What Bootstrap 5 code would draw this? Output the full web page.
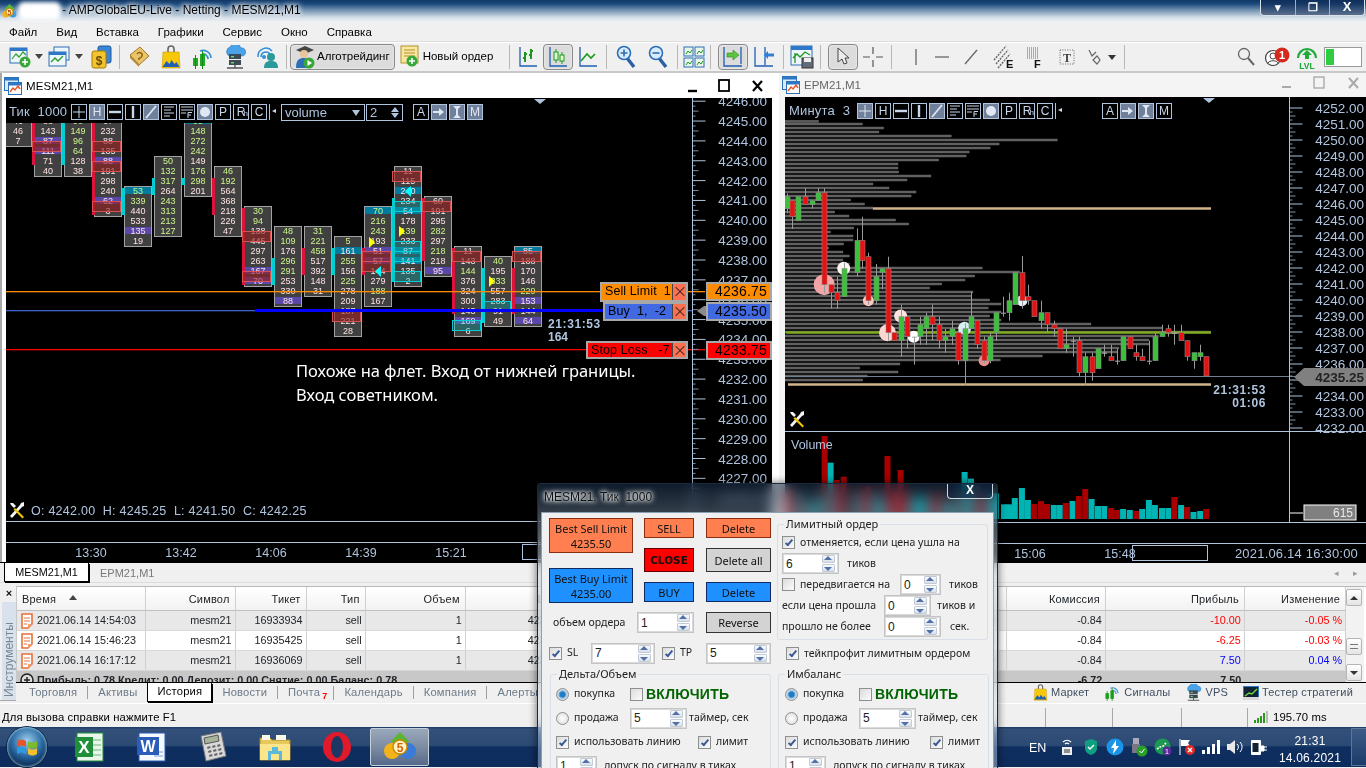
<!DOCTYPE html>
<html lang="ru">
<head>
<meta charset="UTF-8">
<title>AMPGlobalEU-Live - Netting - MESM21,M1</title>
<link href="https://cdn.jsdelivr.net/npm/bootstrap@5.3.3/dist/css/bootstrap.min.css" rel="stylesheet">
<style>
html,body{width:1366px;height:768px;overflow:hidden;margin:0}
body{background:#f0f0f0;font-family:"Liberation Sans",Arial,sans-serif;font-size:12px;color:#000;position:relative}
.app{width:1366px;height:768px}
/* title bar */
.ttl{height:22px;background:linear-gradient(180deg,#0f3766 0,#1d4a7c 18%,#6f90b0 45%,#d5dfe8 80%,#eef2f5 100%);position:relative;flex:none}
.ttl-app{width:18px;height:22px;padding:2px 0 0 2px}
.ttl-blur{width:43px;height:18px;background:#fff;border-radius:6px;filter:blur(2px);margin-top:2px}
.ttl-txt{font-size:12px;line-height:20px;text-shadow:0 0 6px #fff,0 0 6px #fff,0 0 4px #fff;white-space:nowrap;padding-left:1px}
.wbtns{position:absolute;right:1px;top:0;width:105px;height:16px;border:1px solid #d8e0ea;border-top:0;border-radius:0 0 4px 4px;background:rgba(16,40,80,.55);color:#fff;font-weight:700}
.wbtns span{flex:1;text-align:center;line-height:14px;border-right:1px solid #9fb0c4;font-size:11px}
.wbtns span:last-child{border:0;font-size:13px}
/* menu + toolbar */
.mnu{height:20px;flex:none;padding:0 0 0 9px;gap:19px;font-size:11.5px;line-height:18px;border-bottom:1px solid #dcdcdc}
.tbr{height:31px;flex:none;border-bottom:2px solid #c8c8c8;border-top:1px solid #fff;padding-left:8px}
.tc{display:flex;align-items:center;justify-content:center;height:26px;flex:none}
.w20{width:20px}.w26{width:26px}.w30{width:30px}.w32{width:32px}.w38{width:38px}.w40{width:40px}
.tsep{width:1px;height:24px;background:#b8b8b8;margin:0 3px;flex:none}
.tact{border:1px solid #8a8a8a;border-radius:4px;background:#dcdcdc;box-shadow:inset 0 0 2px #fff}
.tlbl{font-size:11.5px;white-space:nowrap;padding-left:2px}
/* mdi */
.mdi{height:490px;flex:none;border-bottom:1px solid #000}
.wl{width:779px;background:#fff;border-left:2px solid #a8a8a8;flex:none}
.wr{width:587px;background:#f4f4f4;flex:none}
.wtl{height:25px;font-size:11.5px;line-height:22px;padding-left:2px;letter-spacing:.1px}
.wtr{height:24px;font-size:11.5px;line-height:20px;padding-left:3px;color:#666}
.chart{background:#000;position:relative;overflow:hidden;flex:1}
.chl{margin:0 7px 0 4px}
.chr{margin-left:6px}
.chart>svg{position:absolute;left:0;top:0;display:block}
.cbar{position:relative;height:16px;margin-top:6px;color:#b0c4de;font-size:13px;z-index:2;align-items:center}
.cbl{padding-left:3px}
.cbl2{padding-left:4px}
.tn{width:62px;padding-left:0;white-space:pre;letter-spacing:.2px}
.tn2{width:68px;white-space:pre;letter-spacing:.2px}
.cb{width:16px;height:16px;border:1px solid #b0c4de;margin-right:2px;text-align:center;line-height:14px;font-size:12px;flex:none;position:relative;color:#c8d6e8;overflow:hidden}
.cb svg{display:block;width:14px;height:14px}
.cb em{font-style:normal;font-size:8px;position:absolute;right:0;bottom:-2px}
.cb.onb{background:#70809a;color:#dfe7f2}
.cnb{width:9px;border:0;border-left:1px solid #b0c4de;font-size:8px}
.cmb{width:84px;height:17px;border:1px solid #b0c4de;margin:0 1px 0 1px;padding-left:3px;line-height:15px;font-size:13px;position:relative}
.cmb::after{content:"";position:absolute;right:4px;top:5px;border:4px solid transparent;border-top:6px solid #b0c4de;border-bottom:0}
.csp{width:37px;height:17px;border:1px solid #b0c4de;padding-left:3px;line-height:15px;position:relative;margin-right:10px}
.csp::before{content:"";position:absolute;right:3px;top:2px;border:4px solid transparent;border-bottom:5px solid #b0c4de;border-top:0}
.csp::after{content:"";position:absolute;right:3px;bottom:2px;border:4px solid transparent;border-top:5px solid #b0c4de;border-bottom:0}
.gapr{margin-left:36px}
.ord{position:absolute;display:flex;border:2px solid #a8a8a8;font-size:12.5px;line-height:15px;color:#000;z-index:2;white-space:pre}
.ord b{font-weight:400;flex:1;padding-left:3px;letter-spacing:.1px}
.ord i{width:14px;border-left:1px solid #444;background:#ff7050;font-style:normal;position:relative}
.ord i::before,.ord i::after{content:"";position:absolute;left:1px;top:7px;width:12px;height:1px;background:#222;transform:rotate(45deg)}
.ord i::after{transform:rotate(-45deg)}
.prc{position:absolute;width:66px;height:19px;border:2px solid #a8a8a8;text-align:right;font-size:14px;line-height:15px;padding-right:3px;z-index:2;letter-spacing:.2px}
.o1{left:594px;top:184px;width:88px;height:20px}
.o2{left:597px;top:204px;width:85px;height:19px}
.o3{left:580px;top:243px;width:102px;height:18px}
.p1{left:700px;top:184px;background:#ff8c00}
.p2{left:700px;top:204px;background:#4169e1}
.p3{left:700px;top:243px;background:#f00}
.bgo{background:#ff8c00}.bgb{background:#4169e1}.bgr{background:#f00}
.note{position:absolute;left:290px;top:261px;width:390px;color:#fff;font-family:"Noto Sans",sans-serif;font-size:16.5px;line-height:24px;z-index:2}
/* mdi tabs */
.mtabs{height:20px;flex:none;align-items:flex-end;position:relative;border-bottom:1px solid #ddd}
.mtab{width:85px;height:19px;margin-left:4px;background:#fff;border:1px solid #000;border-top:0;text-align:center;line-height:18px;font-size:10.8px;box-shadow:1px 1px 0 #000}
.mtab2{margin-left:11px;color:#777;line-height:18px;font-size:11px}
.marr{margin-left:auto;padding-right:8px;color:#999;font-size:9px;gap:14px;line-height:18px}
/* toolbox */
.tbx{height:118px;flex:none;padding:3px 0 0 0;position:relative;border-bottom:1px solid #aaa;margin-bottom:2px}
.tside{width:14px;margin-left:2px;flex:none;background:#d9e2ec;color:#7c8794;position:relative}
.tclose{height:16px;background:#f0f0f0;text-align:center;font-weight:700;font-size:11px;line-height:14px;color:#111}
.tvert{writing-mode:vertical-rl;transform:rotate(180deg);font-size:12px;line-height:14px;height:97px;text-align:left;padding-top:2px}
.tmain{flex:1;min-width:0;position:relative}
.twrap{height:96px;overflow:hidden;border-top:1px solid #b8b8b8;border-left:1px solid #c8c8c8;background:#fff;position:relative}
.tbl{table-layout:fixed;width:1329px;margin:0;border-collapse:collapse;font-size:10.8px}
.tbl th,.tbl td{padding:0 3px 0 0;height:20px;line-height:18px;border-right:1px solid #d0d0d0;border-bottom:1px solid #d8d8d8;text-align:right;font-weight:400;white-space:nowrap;overflow:hidden;background:transparent;color:inherit}
.tbl th{height:23px;background:linear-gradient(#fff,#f2f2f2);padding:0 5px 2px 0;border-bottom:1px solid #c0c0c0;letter-spacing:.2px;font-size:11px}
.tbl tr.zeb td{background:#e8e8e8}
.tbl tr.sum td{background:#c8c8c8;font-weight:700;border:0}
.tbl .tl{text-align:left;padding-left:5px;position:relative}
.tbl td.tl{padding-left:20px}
.tbl td svg{position:absolute;left:3px;top:2px}
.sa{position:absolute;left:52px;top:8px;border:4px solid transparent;border-bottom:5px solid #444;border-top:0}
.neg{color:#f00!important}.pos{color:#00f!important}
.vsb{position:absolute;right:2px;top:0;width:18px;height:96px;background:#f2f2f2;z-index:1}
.vb{position:absolute;left:0;width:16px;height:17px;background:linear-gradient(#fff,#e4e4e4);border:1px solid #b4b4b4;border-radius:2px;text-align:center}
.vb1{top:2px}.vb2{top:51px;color:#777}.vb3{top:77px}
.vb1::after{content:"";position:absolute;left:3px;top:6px;border:4px solid transparent;border-bottom:4px solid #333;border-top:0}
.vb3::after{content:"";position:absolute;left:3px;top:6px;border:4px solid transparent;border-top:4px solid #333;border-bottom:0}
.vb2::after{content:"";position:absolute;left:3px;top:5px;width:8px;height:5px;border-top:1px solid #777;border-bottom:1px solid #777}
.ttabs{height:20px;border-top:1px solid #000;font-size:11.2px;color:#6c7a88;align-items:center;letter-spacing:.2px;position:relative;background:#f0f0f0;padding-left:3px}
.ttb{padding:0 10px;border-right:1px solid #a0a0a0;line-height:13px;white-space:nowrap}
.ttb.noln{border:0}
.ttb.pcht{padding-right:6px}
.ttb.act{background:#fff;color:#000;border:1px solid #000;border-top:0;height:19px;line-height:17px;margin:0;width:65px;padding:0;text-align:center;box-shadow:1px 1px 0 #000;align-self:flex-start}
.mail{color:#f00;font-size:9px;font-weight:700;position:relative;top:3px;padding-left:2px}
.ttr{margin-left:auto;padding-right:13px;gap:15px;color:#404f60;align-items:center;font-size:11px}
.ttr span{display:flex;align-items:center;gap:3px;white-space:nowrap}
/* status + taskbar */
.stb{height:24px;flex:none;align-items:center;font-size:11.3px;padding:3px 0 0 2px;letter-spacing:.12px;border-top:1px solid #fff}
.stb-c{border-left:1px solid #a8a8a8;height:19px;flex:none}
.s1{margin-left:auto;width:67px}.s2{width:69px}.s3{width:66px}
.s4{width:119px;display:flex;align-items:center;padding-left:6px;gap:5px}
.tkb{height:40px;flex:none;background:linear-gradient(180deg,#1d3a63 0,#33507a 6%,#2b4a74 46%,#0f2f60 50%,#0d2c5c 100%);color:#fff;align-items:center;position:relative}
.orb{width:40px;height:40px;border-radius:50%;margin-left:7px;flex:none;display:flex;align-items:center;justify-content:center;background:radial-gradient(circle at 50% 35%,#9fd0ee,#2c6ca4 45%,#0a2c58 75%);box-shadow:0 0 0 1px #0a2548,inset 0 0 3px #dff}
.tk{width:62px;height:38px;flex:none;display:flex;align-items:center;justify-content:center}
.tk1{margin-left:11px}
.tkact{background:linear-gradient(180deg,#9aa8ba,#7c8ca2 50%,#55698a);border:1px solid #c5cfdb;border-radius:2px;width:59px;margin-left:2px}
.tray{margin-left:auto;align-items:center;height:40px}
.try{width:24px;text-align:center;display:flex;justify-content:center;flex:none}
.lng{width:26px;font-size:12.5px;padding-top:2px;flex:none}
.clk{width:76px;font-size:12px;line-height:17px;text-align:center;letter-spacing:.2px;flex:none;margin:0 3px 0 1px;padding-top:6px}
.dsk{width:15px;height:38px;border:1px solid #5d7698;border-right:0;background:linear-gradient(#3e5c86,#1a3a69);flex:none}
/* order panel */
.dlg{position:absolute;left:537px;top:483px;width:461px;height:285px;z-index:5;overflow:hidden;border:1px solid #1b2a3f;border-bottom:0;background:linear-gradient(180deg,rgba(30,55,85,.5) 0,rgba(185,203,218,.5) 22%,rgba(205,220,232,.4) 100%);backdrop-filter:blur(7px) saturate(1.3);border-radius:4px 4px 0 0;box-shadow:0 0 8px rgba(0,0,0,.6)}
.dttl{height:28px;padding:6px 0 0 6px;font-size:12px;line-height:15px;text-shadow:0 0 6px #fff,0 0 5px #f0f4f8,0 0 3px #f0f4f8;color:#111;position:relative;white-space:pre}
.dcls{position:absolute;right:4px;top:0;width:46px;height:15px;border:1px solid #d0d8e2;border-top:0;border-radius:0 0 4px 4px;background:rgba(10,30,60,.5);color:#fff;text-align:center;font-weight:700;font-size:12px;line-height:13px;text-shadow:none}
.dbody{margin:0 3px;height:260px;background:#f0f0f0;padding:5px 0 0 7px;font-size:10.5px;font-family:"Noto Sans","Liberation Sans",sans-serif;color:#222;border:1px solid #8ca0b4;border-bottom:0}
.dcols{gap:6px}
.dleft{width:222px;flex:none}
.dright{width:211px;flex:none}
.dbtn{display:block;border-radius:0;padding:0;border:1px solid #444;font-size:11px;line-height:15px;color:#111;text-align:center;width:100%;--bs-btn-hover-color:#111}
.dbtn,.dbtn:hover{color:#111}
.cw1{width:84px;flex:none}.cw2{width:50px;flex:none;margin-left:11px}.cw3{width:65px;flex:none;margin-left:12px}
.h35{height:35px}.h20{height:20px}.h24{height:24px}.h21{height:21px}
.vg15{gap:15px}.vg10{gap:10px}
.org,.org:hover{background:#ff7f50;border-color:#8a2e10}
.blu,.blu:hover{background:#1e90ff;border-color:#102a60}
.red,.red:hover{background:#f00;border-color:#600;font-weight:700;font-family:"DejaVu Sans",sans-serif;font-size:10.5px}
.lgr,.lgr:hover{background:#d3d3d3;border-color:#333}
.rw{display:flex;align-items:center;white-space:nowrap}
.rv{margin-top:9px;height:21px}
.rs{margin-top:10px;height:20px}
.spn{display:inline-flex;align-items:center;height:21px;border:1px solid #c4c4c4;outline:1px solid #dadada;outline-offset:-2px;background:#fff;padding-left:3px;font-size:12px;position:relative;flex:none;font-family:"Liberation Sans",sans-serif}
.spn::before,.spn::after{content:"";position:absolute;right:3px;width:13px;height:8px;background:linear-gradient(#fafbfd,#d8dfe8);border:1px solid #c2cbd6;border-radius:1px}
.spn::before{top:1px}.spn::after{bottom:1px}
.spn u{position:absolute;right:6px;z-index:1;border:4px solid transparent;text-decoration:none}
.spn u:first-of-type{top:2px;border-bottom:4px solid #5070a8;border-top:0}
.spn u:last-of-type{bottom:2px;border-top:4px solid #5070a8;border-bottom:0}
.s41{width:41px}.s47{width:47px}.s57{width:57px}.s64{width:64px}.s65{width:65px}
.chk{width:13px;height:13px;border:1px solid #8e8f8f;background:linear-gradient(135deg,#dcdcdc,#fbfbfb);display:inline-block;flex:none;position:relative;margin-right:5px}
.chk.on::after{content:"";position:absolute;left:4px;top:1px;width:4px;height:8px;border:solid #3a5a98;border-width:0 2px 2px 0;transform:rotate(40deg)}
.rdo{width:13px;height:13px;border-radius:50%;border:1px solid #8e8f8f;background:radial-gradient(circle,#fff,#d8d8d8);flex:none;display:inline-block;margin-right:5px}
.rdo.on{background:radial-gradient(circle,#1c7cc8 0,#1c7cc8 30%,#bcd2e4 55%,#eee 100%)}
.gbx{border:1px solid #d8dfe6;border-radius:3px;position:relative}
.gt{position:absolute;top:-8px;left:6px;background:#f0f0f0;padding:0 2px;font-size:11px;line-height:14px}
.gl{padding:7px 4px 0 4px;height:116px;margin-top:6px}
.gl .rw{height:21px}
.tkp{height:27px;padding-left:9px;margin-top:0}
.dbot{gap:7px;margin-top:7px;padding-left:1px}
.gb{width:221px;height:110px;padding:7px 0 0 5px}
.gb2{width:211px;padding-left:6px}
.gb .rw{height:24px}
.vk{color:#006400;font-weight:700;font-size:14px;font-family:"Liberation Sans",sans-serif;letter-spacing:.25px;margin-left:-2px}
.lbsl{width:24px;flex:none}.lbtp{margin-left:7px}
.lb100{width:100px;flex:none}.lb102{width:102px;flex:none}
.m2{margin-left:2px}.m8{margin-left:8px}.m6{margin-left:6px}.m9{margin-left:9px}
.wl1{width:56px;flex:none}
.lb1{width:124px;flex:none}.lb2{width:127px;flex:none}
.dp{margin-left:7px}
</style>
</head>
<body>
<svg width="0" height="0" class="position-absolute">
<defs>
<symbol id="i-bag" viewBox="0 0 20 24"><path d="M7 7V4a3 3 0 0 1 6 0v3" fill="none" stroke="#666" stroke-width="1.6"/><path d="M2 7h16l1 16H1z" fill="#f7c80a" stroke="#c89a00" stroke-width=".6"/><path d="M1.500 22l4-6 3 3 2-4 3 4 2-2 3 5z" fill="#1f5fb4"/></symbol>
<symbol id="i-sig" viewBox="0 0 24 24"><path d="M9 6a8 8 0 0 1 11 7M11 9a5 5 0 0 1 6 5" fill="none" stroke="#2f8fd8" stroke-width="1.600"/><rect x="2" y="13" width="5" height="8" fill="#22aa22"/><rect x="9" y="9" width="5" height="12" fill="#22aa22"/><path d="M4.500 10v14M11.500 6v18" stroke="#118811"/></symbol>
<symbol id="i-vps" viewBox="0 0 24 24"><path d="M6 11a5 5 0 0 1 1-9 6 6 0 0 1 11 1 4 4 0 0 1 1 8z" fill="#4aa3e8" stroke="#1f6fb8" stroke-width=".6"/><rect x="6" y="9" width="12" height="5" fill="#3c4a54"/><rect x="6" y="15" width="12" height="5" fill="#3c4a54"/><rect x="8" y="11" width="3" height="1.400" fill="#6fdc6f"/><rect x="8" y="17" width="3" height="1.400" fill="#6fdc6f"/><path d="M12 20v3M4 23h16" stroke="#555" stroke-width="1.400"/></symbol>
<symbol id="i-win" viewBox="0 0 18 18"><rect x=".5" y=".5" width="14" height="13" fill="#dbeaf8" stroke="#2d6fb4"/><rect x=".5" y=".5" width="14" height="3" fill="#2d78c8"/><rect x="4.500" y="5.500" width="13" height="12" fill="#fff" stroke="#2d6fb4"/><rect x="4.500" y="5.500" width="13" height="3" fill="#2d78c8"/><path d="M6 15l3-4 2 2 3-4 2 3" fill="none" stroke="#e8552a" stroke-width="1.400"/></symbol>
<symbol id="i-doc" viewBox="0 0 14 16"><path d="M2 1h10v10l-4 4H2z" fill="#fff" stroke="#e8703a" stroke-width="1.600"/><path d="M4 5h6M4 8h6M4 11h3" stroke="#e8703a"/><path d="M8 15v-4h4z" fill="#f6a070"/></symbol>
<symbol id="i-tool" viewBox="0 0 18 18"><path d="M16 1l-3 1-1 2-10 11 2 2 10-11 2-1z" fill="#f4f4f4"/><path d="M2 2l3 0 3 3-2 2-3-3z" fill="#f4f4f4"/><path d="M7 7l9 9-1.500 1.500-9-9z" fill="#f0c400"/></symbol>
<symbol id="c-pl" viewBox="0 0 14 14"><path d="M7 1v12M1 7h12" stroke="currentColor" fill="none"/></symbol>
<symbol id="c-hl" viewBox="0 0 14 14"><path d="M1 7h12" stroke="currentColor" stroke-width="2.400"/></symbol>
<symbol id="c-vl" viewBox="0 0 14 14"><path d="M7 1v12" stroke="currentColor" stroke-width="2.400"/></symbol>
<symbol id="c-dg" viewBox="0 0 14 14"><path d="M2 13L12 1" stroke="currentColor" stroke-width="1.800"/></symbol>
<symbol id="c-ls" viewBox="0 0 14 14"><path d="M2 2h10M2 5h7M2 8h10M2 11h6" stroke="currentColor"/></symbol>
<symbol id="c-lf" viewBox="0 0 14 14"><path d="M1 2h12M1 5h12M1 8h5" stroke="currentColor"/><path d="M8 13V7.500h4M8 10h3" stroke="currentColor" fill="none"/></symbol>
<symbol id="c-dt" viewBox="0 0 14 14"><circle cx="7" cy="7" r="5" fill="currentColor"/></symbol>
<symbol id="c-ar" viewBox="0 0 14 14"><path d="M1 6h6V3l5 4-5 4V8H1z" fill="currentColor"/></symbol>
<symbol id="c-ib" viewBox="0 0 14 14"><path d="M3 1h8l-3 3v6l3 3H3l3-3V4z" fill="currentColor"/></symbol>
</defs>
</svg>
<div class="app d-flex flex-column">
  <div class="ttl d-flex">
    <div class="ttl-app"><svg width="15" height="17" viewBox="0 0 15 17"><circle cx="4" cy="11" r="3.500" fill="#f2b21a"/><circle cx="11" cy="11" r="3.500" fill="#3a9ad9"/><path d="M7.500 1l5 5-5 4-5-4z" fill="#5cb531"/><circle cx="7.500" cy="9" r="3.600" fill="#fff3c4" stroke="#c98a00"/><text x="7.500" y="11.500" font-size="7" font-weight="700" text-anchor="middle" fill="#c24e00">5</text></svg></div>
    <div class="ttl-blur"></div>
    <div class="ttl-txt">- AMPGlobalEU-Live - Netting - MESM21,M1</div>
    <div class="wbtns d-flex"><span>▾</span><span>❐</span><span>X</span></div>
  </div>
  <div class="mnu d-flex align-items-center">
    <span>Файл</span><span>Вид</span><span>Вставка</span><span>Графики</span><span>Сервис</span><span>Окно</span><span>Справка</span>
  </div>
  <div class="tbr d-flex align-items-center">
    <div class="tc w38"><svg width="36" height="22" viewBox="0 0 36 22"><rect x="1" y="2" width="17" height="15" fill="#eef5fb" stroke="#2d6fb4"/><rect x="1" y="2" width="17" height="3" fill="#2d78c8"/><path d="M3 13l4-5 3 3 4-5 3 3" fill="none" stroke="#2aa02a" stroke-width="1.200"/><circle cx="16" cy="16" r="5.500" fill="#38a838"/><path d="M13 16h6M16 13v6" stroke="#fff" stroke-width="1.600"/><path d="M26 8h8l-4 5z" fill="#444"/></svg></div>
    <div class="tc w40"><svg width="36" height="22" viewBox="0 0 36 22"><rect x="6" y="1" width="15" height="13" fill="#eef5fb" stroke="#2d6fb4"/><rect x="1" y="6" width="17" height="14" fill="#eef5fb" stroke="#2d6fb4"/><rect x="1" y="6" width="17" height="3" fill="#2d78c8"/><path d="M3 16l4-4 3 3 5-5" fill="none" stroke="#2aa02a" stroke-width="1.400"/><path d="M27 8h8l-4 5z" fill="#444"/></svg></div>
    <div class="tc w30"><svg width="22" height="24" viewBox="0 0 22 24"><rect x="8" y="1" width="13" height="17" rx="2" fill="#3a84d4" stroke="#1d5aa0"/><rect x="2" y="6" width="14" height="17" rx="2" fill="#f4c430" stroke="#a67c00"/><text x="9" y="20" font-size="12" font-weight="700" text-anchor="middle" fill="#6a4b00">$</text></svg></div>
    <div class="tsep"></div>
    <div class="tc w32"><svg width="22" height="22" viewBox="0 0 22 22"><path d="M2 9l10-8 9 9-10 9z" fill="#e8c46a" stroke="#a5792a"/><path d="M2 9l9 9v3L2 12z" fill="#b58a3a"/><path d="M9 8c2-3 6-1 5 2s-4 1-3 4" fill="none" stroke="#9a6a10" stroke-width="1.600"/></svg></div>
    <div class="tc w32"><svg width="20" height="24"><use href="#i-bag"/></svg></div>
    <div class="tc w32"><svg width="24" height="24"><use href="#i-sig"/></svg></div>
    <div class="tc w32"><svg width="24" height="24"><use href="#i-vps"/></svg></div>
    <div class="tc w32"><svg width="24" height="24" viewBox="0 0 24 24"><path d="M3 12a8 8 0 0 1 14-6M6 12a5 5 0 0 1 9-3" fill="none" stroke="#2f8fd8" stroke-width="1.500"/><circle cx="9" cy="12" r="2" fill="#2f8fd8"/><circle cx="16" cy="12" r="4" fill="#2a9a9a"/><path d="M9 23c0-6 3-7 7-7s7 1 7 7z" fill="#2a9a9a"/></svg></div>
    <div class="tsep"></div>
    <div class="tc tact px-1"><svg width="20" height="24" viewBox="0 0 20 24"><path d="M1 5l9-4 9 4-9 4z" fill="#444"/><circle cx="9" cy="9" r="4" fill="#e8c49a"/><path d="M1 23c0-8 3-10 8-10s7 3 7 10z" fill="#2d6fb4"/><circle cx="14" cy="18" r="5.500" fill="#38a838"/><path d="M12.500 15v6l4.500-3z" fill="#fff"/></svg><span class="tlbl">Алготрейдинг</span></div>
    <div class="tc ms-1"><svg width="22" height="24" viewBox="0 0 22 24"><rect x="2" y="1" width="17" height="17" fill="#f8e7a0" stroke="#b4922a"/><path d="M5 5h11M5 8h11M5 11h11" stroke="#b4922a"/><circle cx="13" cy="16" r="5.500" fill="#38a838"/><path d="M10 16h6M13 13v6" stroke="#fff" stroke-width="1.600"/></svg><span class="tlbl">Новый ордер</span></div>
    <div class="tsep ms-3"></div>
    <div class="tc w30"><svg width="20" height="22" viewBox="0 0 20 22"><path d="M2 1v19h17" fill="none" stroke="#1f5fb4" stroke-width="1.300"/><path d="M7 6v10M5 12h2M7 8h2M13 3v10M11 9h2M13 5h2" stroke="#1a9a1a" stroke-width="2"/></svg></div>
    <div class="tc w30 tact"><svg width="20" height="22" viewBox="0 0 20 22"><path d="M2 1v19h17" fill="none" stroke="#1f5fb4" stroke-width="1.300"/><path d="M8 3v14M14 6v12" stroke="#1a9a1a"/><rect x="6" y="6" width="4" height="8" fill="#dfffd0" stroke="#1a9a1a"/><rect x="12" y="9" width="4" height="6" fill="#dfffd0" stroke="#1a9a1a"/></svg></div>
    <div class="tc w30"><svg width="20" height="22" viewBox="0 0 20 22"><path d="M2 1v19h17" fill="none" stroke="#1f5fb4" stroke-width="1.300"/><path d="M3 15l6-7 4 4 4-4" fill="none" stroke="#1a9a1a" stroke-width="1.600"/></svg></div>
    <div class="tsep"></div>
    <div class="tc w32"><svg width="20" height="24" viewBox="0 0 20 24"><path d="M11 13l7 9" stroke="#2d5fa8" stroke-width="3.400"/><circle cx="8" cy="8" r="6.500" fill="#d8ecfb" stroke="#2d6fb4" stroke-width="1.600"/><path d="M4.500 8h7M8 4.500v7" stroke="#2d6fb4" stroke-width="1.600"/></svg></div>
    <div class="tc w32"><svg width="20" height="24" viewBox="0 0 20 24"><path d="M11 13l7 9" stroke="#2d5fa8" stroke-width="3.400"/><circle cx="8" cy="8" r="6.500" fill="#d8ecfb" stroke="#2d6fb4" stroke-width="1.600"/><path d="M4.500 8h7" stroke="#2d6fb4" stroke-width="1.600"/></svg></div>
    <div class="tsep"></div>
    <div class="tc w26"><svg width="22" height="22" viewBox="0 0 22 22"><g fill="#e8f4ea" stroke="#2d6fb4"><rect x="1" y="1" width="9" height="9"/><rect x="12" y="1" width="9" height="9"/><rect x="1" y="12" width="9" height="9"/><rect x="12" y="12" width="9" height="9"/></g><path d="M3 8l2-3 2 2 2-3M14 8l2-3 2 2 2-3M3 19l2-3 2 2 2-3M14 19l2-3 2 2 2-3" fill="none" stroke="#1a9a1a"/></svg></div>
    <div class="tsep"></div>
    <div class="tc w30 tact ms-1"><svg width="22" height="22" viewBox="0 0 22 22"><path d="M2 1v19h18M19 1v17" fill="none" stroke="#1f5fb4" stroke-width="1.300"/><path d="M5 7h6V4l6 5-6 5v-3H5z" fill="#5cc43c" stroke="#2a8a1a" stroke-width=".6"/></svg></div>
    <div class="tc w32"><svg width="22" height="22" viewBox="0 0 22 22"><path d="M2 1v19h18M12 1v18" fill="none" stroke="#1f5fb4" stroke-width="1.300"/><path d="M21 7.500h-6V5l-4 4 4 4v-2.500h6z" fill="#2f7fd8"/></svg></div>
    <div class="tsep"></div>
    <div class="tc w30"><svg width="24" height="24" viewBox="0 0 24 24"><rect x="1" y="1" width="21" height="19" fill="#eef5fb" stroke="#2d6fb4"/><rect x="1" y="1" width="21" height="4" fill="#2d78c8"/><path d="M5 18V8M3 13l4-4 3 3 5-5 5 3" fill="none" stroke="#1a9a1a" stroke-width="1.300"/><rect x="12" y="13" width="11" height="10" fill="#606c78" stroke="#333"/><rect x="14" y="13" width="7" height="4" fill="#eee"/></svg></div>
    <div class="tsep"></div>
    <div class="tc w30 tact ms-1"><svg width="14" height="20" viewBox="0 0 14 20"><path d="M2 1v14l4-3 2 5 3-1-2-5h4z" fill="#eee" stroke="#444"/></svg></div>
    <div class="tc w30"><svg width="22" height="22" viewBox="0 0 22 22"><path d="M11 1v7M11 14v7M1 11h7M14 11h7" stroke="#555" stroke-width="1.200"/></svg></div>
    <div class="tsep"></div>
    <div class="tc w26 ms-2"><svg width="6" height="18"><path d="M3 1v16" stroke="#666" stroke-width="1.300"/></svg></div>
    <div class="tc w26"><svg width="16" height="6"><path d="M1 3h14" stroke="#666" stroke-width="1.300"/></svg></div>
    <div class="tc w32"><svg width="14" height="16"><path d="M1 15L13 1" stroke="#666" stroke-width="1.300"/></svg></div>
    <div class="tc w32"><svg width="22" height="24" viewBox="0 0 22 24"><path d="M2 15l12-14M4 19L16 5M6 23L18 9" stroke="#666" stroke-dasharray="2 1" stroke-width="1.400"/><text x="14" y="23" font-size="11" font-weight="700" fill="#111">E</text></svg></div>
    <div class="tc w32"><svg width="20" height="24" viewBox="0 0 20 24"><path d="M2 3h12M2 5h12M2 7h12M2 9h12M2 11h12M2 13h12" stroke="#666" stroke-dasharray="1 1"/><text x="9" y="23" font-size="11" font-weight="700" fill="#111">F</text></svg></div>
    <div class="tc w32"><svg width="18" height="20" viewBox="0 0 18 20"><rect x="2" y="3" width="14" height="14" fill="none" stroke="#666" stroke-dasharray="1 1.400"/><text x="9" y="15" font-size="12" font-weight="700" text-anchor="middle" font-family="Liberation Serif" fill="#444">T</text></svg></div>
    <div class="tc w38"><svg width="32" height="20" viewBox="0 0 32 20"><path d="M3 3l3 6 4-4M7 13l4-4 3 4-3 4z" fill="none" stroke="#666" stroke-width="1.200"/><path d="M22 8h8l-4 5z" fill="#333"/></svg></div>
    <div class="tsep"></div>
    <div class="ms-auto d-flex align-items-center">
      <div class="tc w32"><svg width="18" height="20" viewBox="0 0 18 20"><circle cx="7" cy="7" r="5.500" fill="none" stroke="#666" stroke-width="1.300"/><path d="M11 11l6 7" stroke="#666" stroke-width="2"/></svg></div>
      <div class="tc w32"><svg width="28" height="24" viewBox="0 0 28 24"><circle cx="9" cy="13" r="7.500" fill="#fff" stroke="#444" stroke-width="1.200"/><circle cx="9" cy="11" r="3" fill="none" stroke="#444"/><path d="M4 18c1-3 9-3 10 0" fill="none" stroke="#444"/><circle cx="18" cy="10" r="7.500" fill="#d42a1e"/><text x="18" y="14" font-size="11" font-weight="700" fill="#fff" text-anchor="middle">1</text></svg></div>
      <div class="tc w26"><svg width="24" height="26" viewBox="0 0 24 26"><path d="M3 14a9 9 0 0 1 18 0" fill="none" stroke="#1faa3a" stroke-width="2.200"/><path d="M12 6l5 5h-3v4h-4v-4H7z" fill="#1faa3a"/><text x="12" y="25" font-size="8.500" font-weight="700" text-anchor="middle" fill="#1faa3a">LVL</text></svg></div>
      <div class="tc ms-1 me-1"><svg width="38" height="20" viewBox="0 0 38 20"><rect x=".5" y=".5" width="37" height="19" fill="#fff" stroke="#999"/><rect x="2" y="2" width="8" height="16" fill="#2ecc40"/></svg></div>
    </div>
  </div>

  <div class="mdi d-flex">
    <div class="wl d-flex flex-column">
      <div class="wtl d-flex align-items-center justify-content-between">
        <span class="d-flex align-items-center"><svg width="18" height="18" class="me-1"><use href="#i-win"/></svg>MESM21,M1</span>
        <svg width="90" height="20" viewBox="0 0 90 20" class="me-1"><path d="M3 15h9" stroke="#000" stroke-width="2.400"/><rect x="34" y="4" width="10" height="11" fill="none" stroke="#000" stroke-width="1.800"/><path d="M68 5l9 10M77 5l-9 10" stroke="#000" stroke-width="2.200"/></svg>
      </div>
      <div class="chart chl" id="cl">
        <svg id="svl" width="766" height="463" viewBox="6 99 766 463"></svg>
        <div class="cbar d-flex cbl">
          <span class="tn">Тик  1000 </span>
          <span class="cb"><svg><use href="#c-pl"/></svg></span><span class="cb onb">H</span><span class="cb"><svg><use href="#c-hl"/></svg></span><span class="cb"><svg><use href="#c-vl"/></svg></span><span class="cb onb"><svg><use href="#c-dg"/></svg></span><span class="cb"><svg><use href="#c-ls"/></svg></span><span class="cb"><svg><use href="#c-lf"/></svg></span><span class="cb onb"><svg><use href="#c-dt"/></svg></span><span class="cb">P</span><span class="cb">R<em>h</em></span><span class="cb">C</span><span class="cb cnb">◂</span>
          <span class="cmb">volume</span><span class="csp">2</span>
          <span class="cb">A</span><span class="cb onb"><svg><use href="#c-ar"/></svg></span><span class="cb onb"><svg><use href="#c-ib"/></svg></span><span class="cb onb">M</span>
        </div>
        <div class="ord o1 bgo"><b>Sell Limit  1</b><i></i></div>
        <div class="ord o2 bgb"><b>Buy  1,  -2</b><i></i></div>
        <div class="ord o3 bgr"><b>Stop Loss   -7</b><i></i></div>
        <div class="prc p1">4236.75</div>
        <div class="prc p2">4235.50</div>
        <div class="prc p3">4233.75</div>
        <div class="note">Похоже на флет. Вход от нижней границы.<br>Вход советником.</div>
      </div>
    </div>
    <div class="wr d-flex flex-column">
      <div class="wtr d-flex align-items-center justify-content-between">
        <span class="d-flex align-items-center"><svg width="18" height="18" class="me-1"><use href="#i-win"/></svg>EPM21,M1</span>
        <svg width="82" height="20" viewBox="0 0 82 20" class="me-1"><path d="M2 12h9" stroke="#aaa" stroke-width="2"/><rect x="34" y="2" width="10" height="11" fill="none" stroke="#aaa" stroke-width="1.400"/><path d="M69 3l9 10M78 3l-9 10" stroke="#aaa" stroke-width="2"/></svg>
      </div>
      <div class="chart chr" id="cr">
        <svg id="svr" width="581" height="465" viewBox="785 97 581 465"></svg>
        <div class="cbar d-flex cbl2">
          <span class="tn2">Минута  3 </span>
          <span class="cb onb"><svg><use href="#c-pl"/></svg></span><span class="cb">H</span><span class="cb"><svg><use href="#c-hl"/></svg></span><span class="cb"><svg><use href="#c-vl"/></svg></span><span class="cb onb"><svg><use href="#c-dg"/></svg></span><span class="cb"><svg><use href="#c-ls"/></svg></span><span class="cb"><svg><use href="#c-lf"/></svg></span><span class="cb onb"><svg><use href="#c-dt"/></svg></span><span class="cb">P</span><span class="cb">R<em>h</em></span><span class="cb">C</span><span class="cb cnb">◂</span>
          <span class="cb gapr">A</span><span class="cb onb"><svg><use href="#c-ar"/></svg></span><span class="cb onb"><svg><use href="#c-ib"/></svg></span><span class="cb">M</span>
        </div>
      </div>
    </div>
  </div>

  <div class="mtabs d-flex">
    <div class="mtab">MESM21,M1</div><div class="mtab2">EPM21,M1</div>
    <div class="marr d-flex"><span>◂</span><span>▸</span></div>
  </div>

  <div class="tbx d-flex">
    <div class="tside">
      <div class="tclose">×</div>
      <div class="tvert">Инструменты</div>
    </div>
    <div class="tmain">
      <div class="twrap">
        <table class="tbl table">
          <colgroup><col width="128"><col width="90"><col width="71"><col width="59"><col width="100"><col width="105"><col width="90"><col width="90"><col width="90"><col width="80"><col width="78"><col width="8"><col width="99"><col width="139"><col width="101"></colgroup>
          <thead><tr><th class="tl">Время<span class="sa"></span></th><th>Символ</th><th>Тикет</th><th>Тип</th><th>Объем</th><th>Цена</th><th>S / L</th><th>T / P</th><th>Время</th><th>Цена</th><th>Своп</th><th></th><th>Комиссия</th><th>Прибыль</th><th>Изменение</th></tr></thead>
          <tbody>
          <tr class="zeb"><td class="tl"><svg width="14" height="16"><use href="#i-doc"/></svg>2021.06.14 14:54:03</td><td>mesm21</td><td>16933934</td><td>sell</td><td>1</td><td>4237.25</td><td>4239.00</td><td>4235.00</td><td>15:05:11</td><td>4239.25</td><td>0.00</td><td></td><td>-0.84</td><td class="neg">-10.00</td><td class="neg">-0.05 %</td></tr>
          <tr><td class="tl"><svg width="14" height="16"><use href="#i-doc"/></svg>2021.06.14 15:46:23</td><td>mesm21</td><td>16935425</td><td>sell</td><td>1</td><td>4236.50</td><td>4237.75</td><td>4235.00</td><td>15:58:40</td><td>4237.75</td><td>0.00</td><td></td><td>-0.84</td><td class="neg">-6.25</td><td class="neg">-0.03 %</td></tr>
          <tr class="zeb"><td class="tl"><svg width="14" height="16"><use href="#i-doc"/></svg>2021.06.14 16:17:12</td><td>mesm21</td><td>16936069</td><td>sell</td><td>1</td><td>4237.00</td><td>4239.00</td><td>4235.50</td><td>16:24:02</td><td>4235.50</td><td>0.00</td><td></td><td>-0.84</td><td class="pos">7.50</td><td class="pos">0.04 %</td></tr>
          <tr class="sum"><td class="tl" colspan="6"><svg width="14" height="14" viewBox="0 0 14 14"><circle cx="7" cy="7" r="6" fill="#ddd" stroke="#222" stroke-width="1.500"/><path d="M4 7h6M7 4v6" stroke="#222" stroke-width="1.500"/></svg>Прибыль: 0.78  Кредит: 0.00  Депозит: 0.00  Снятие: 0.00  Баланс: 0.78</td><td colspan="6"></td><td>-6.72</td><td>7.50</td><td></td></tr>
          </tbody>
        </table>
        <div class="vsb"><div class="vb vb1"></div><div class="vb vb2"></div><div class="vb vb3"></div></div>
      </div>
      <div class="ttabs d-flex">
        <span class="ttb">Торговля</span><span class="ttb noln">Активы</span><span class="ttb act">История</span><span class="ttb">Новости</span><span class="ttb pcht">Почта<span class="mail">7</span></span><span class="ttb">Календарь</span><span class="ttb">Компания</span><span class="ttb noln">Алерты</span>
        <div class="ttr d-flex">
          <span><svg width="15" height="17"><use href="#i-bag"/></svg>Маркет</span>
          <span><svg width="17" height="17"><use href="#i-sig"/></svg>Сигналы</span>
          <span><svg width="17" height="17"><use href="#i-vps"/></svg>VPS</span>
          <span><svg width="16" height="14" viewBox="0 0 16 14"><rect x=".5" y=".5" width="15" height="13" fill="#123" stroke="#2d78c8"/><path d="M2 10l4-3 3 1 5-5" fill="none" stroke="#6fd83a" stroke-width="1.400"/><rect y="11" width="16" height="3" fill="#d8d8d8"/></svg>Тестер стратегий</span>
        </div>
      </div>
    </div>
  </div>

  <div class="stb d-flex">
    <span>Для вызова справки нажмите F1</span>
    <div class="stb-c s1"></div><div class="stb-c s2"></div><div class="stb-c s3"></div>
    <div class="stb-c s4"><svg width="14" height="12" viewBox="0 0 14 12"><rect y="9" width="2" height="3" fill="#2a9a1a"/><rect x="3" y="7" width="2" height="5" fill="#2a9a1a"/><rect x="6" y="5" width="2" height="7" fill="#2a9a1a"/><rect x="9" y="2" width="2" height="10" fill="#2a9a1a"/><rect x="12" width="2" height="12" fill="#bbb"/></svg>195.70 ms</div>
  </div>

  <div class="tkb d-flex">
    <div class="orb"><svg width="22" height="20" viewBox="0 0 22 20"><path d="M1 4c3-2 6-2 9 0v6c-3-2-6-2-9 0z" fill="#e8532a"/><path d="M12 4c3 2 6 2 9 0v6c-3 2-6 2-9 0z" fill="#7ebb2a"/><path d="M1 11c3-2 6-2 9 0v6c-3-2-6-2-9 0z" fill="#2c9ae0"/><path d="M12 11c3 2 6 2 9 0v6c-3 2-6 2-9 0z" fill="#f6c02a"/></svg></div>
    <div class="tk tk1"><svg width="30" height="30" viewBox="0 0 30 30"><rect x="3" y="1" width="26" height="28" fill="#eaf6ea" stroke="#1f8f3a"/><path d="M17 8h10M17 13h10M17 18h10M17 23h10" stroke="#6ab87a"/><rect x="1" y="5" width="18" height="20" fill="#1f8f3a"/><text x="10" y="21" font-size="17" font-weight="700" text-anchor="middle" fill="#fff">X</text></svg></div>
    <div class="tk"><svg width="30" height="30" viewBox="0 0 30 30"><rect x="3" y="1" width="26" height="28" fill="#f4f8ff" stroke="#2a5cb8"/><path d="M18 20h9M18 24h9" stroke="#7a9ad8"/><rect x="1" y="5" width="22" height="18" fill="#2a5cb8"/><text x="12" y="20" font-size="16" font-weight="700" text-anchor="middle" fill="#fff">W</text></svg></div>
    <div class="tk"><svg width="30" height="32" viewBox="0 0 30 32"><path d="M3 5l20-4 5 24-20 5z" fill="#d8d8d8" stroke="#777"/><path d="M6 7l14-3 1 6-14 3z" fill="#a8b49a" stroke="#555"/><g fill="#666"><path d="M9 16l3-1 .6 2-3 1zM14 15l3-1 .6 2-3 1zM19 14l3-1 .6 2-3 1zM10 20l3-1 .6 2-3 1zM15 19l3-1 .6 2-3 1zM20 18l3-1 .6 2-3 1zM11 24l3-1 .6 2-3 1zM16 23l3-1 .6 2-3 1zM21 22l3-1 .6 2-3 1z"/></g></svg></div>
    <div class="tk"><svg width="34" height="30" viewBox="0 0 34 30"><path d="M2 6h10l2 2h18v20H2z" fill="#e8c85a" stroke="#a88a2a"/><path d="M4 3h8v5H4zM18 3h10v5H18z" fill="#f8f8e8"/><path d="M2 12h30v16H2z" fill="#fbe58a"/><path d="M10 28v-9h4v-4h6v4h4v9h-3v-6h-8v6z" fill="#5cb8d8"/></svg></div>
    <div class="tk"><svg width="30" height="30" viewBox="0 0 30 30"><ellipse cx="15" cy="15" rx="14" ry="15" fill="#e01a2a"/><ellipse cx="15" cy="15" rx="6" ry="11" fill="#1b3763"/></svg></div>
    <div class="tk tkact"><svg width="34" height="32" viewBox="0 0 34 32"><circle cx="9" cy="20" r="8" fill="#f2b21a"/><circle cx="25" cy="20" r="8" fill="#3a7ad9"/><path d="M17 1l9 9-9 8-9-8z" fill="#5cb531"/><circle cx="17" cy="16" r="7" fill="#fff3c4" stroke="#c98a00" stroke-width="1.400"/><text x="17" y="20.500" font-size="12" font-weight="700" text-anchor="middle" fill="#d0600a">5</text></svg></div>
    <div class="tray d-flex">
      <div class="lng">EN</div>
      <div class="try"><svg width="14" height="18" viewBox="0 0 14 18"><path d="M3 4a6 6 0 0 1 8 0M5 6a3 3 0 0 1 4 0" fill="none" stroke="#fff" stroke-width="1.200"/><rect x="2" y="9" width="10" height="8" fill="#eee"/><path d="M4 12h6M4 14h6" stroke="#333"/></svg></div>
      <div class="try"><svg width="14" height="18" viewBox="0 0 14 18"><path d="M7 1l6 2v7c0 4-3 6-6 7-3-1-6-3-6-7V3z" fill="#0e9e80"/><path d="M4 9l2 2 4-4" fill="none" stroke="#fff" stroke-width="1.400"/></svg></div>
      <div class="try"><svg width="18" height="18" viewBox="0 0 18 18"><circle cx="9" cy="9" r="8.500" fill="#1a94e8"/><path d="M10 2L5 10h3l-1 6 6-8h-3z" fill="#fff"/></svg></div>
      <div class="try"><svg width="18" height="20" viewBox="0 0 18 20"><rect x="3" y="1" width="6" height="6" fill="#aab"/><rect x="2" y="7" width="8" height="9" fill="#778"/><circle cx="12" cy="14" r="5.500" fill="#2aa02a"/><path d="M9.500 14l2 2 3-4" fill="none" stroke="#fff"/></svg></div>
      <div class="try"><svg width="18" height="18" viewBox="0 0 18 18"><circle cx="8.500" cy="8.500" r="8" fill="#1a9a50"/><path d="M3 11l3-2 3-1 3-3" stroke="#fff" stroke-width="1.600" stroke-dasharray="2 1"/><circle cx="13" cy="13" r="4.500" fill="#5a2a9a"/><text x="13" y="16" font-size="7" fill="#fff" text-anchor="middle">1</text></svg></div>
      <div class="try"><svg width="18" height="18" viewBox="0 0 18 18"><path d="M2 1v16" stroke="#fff"/><path d="M3 2h9l-2 3 2 3H3z" fill="#fff"/><circle cx="12" cy="12" r="5" fill="#e02a2a"/><path d="M10 10l4 4M14 10l-4 4" stroke="#fff" stroke-width="1.400"/></svg></div>
      <div class="try"><svg width="18" height="14" viewBox="0 0 18 14"><rect y="10" width="3" height="4" fill="#fff"/><rect x="5" y="7" width="3" height="7" fill="#fff"/><rect x="10" y="4" width="3" height="10" fill="#fff"/><rect x="15" width="3" height="14" fill="#fff"/></svg></div>
      <div class="try"><svg width="18" height="16" viewBox="0 0 18 16"><path d="M1 5h3l5-4v14l-5-4H1z" fill="#e8e8e8"/><path d="M11 5a4 4 0 0 1 0 6M14 3a7 7 0 0 1 0 10" fill="none" stroke="#fff"/></svg></div>
      <div class="try"><svg width="18" height="18" viewBox="0 0 18 18"><rect x="1" y="2" width="10" height="15" rx="1" fill="#fff"/><rect x="2.500" y="5" width="6" height="9" fill="#123"/><path d="M11 8h3v5h-3zM14 9h3M14 12h3" fill="#fff" stroke="#fff"/></svg></div>
      <div class="clk">21:31<br>14.06.2021</div>
      <div class="dsk"></div>
    </div>
  </div>
</div>

<div class="dlg">
  <div class="dttl">MESM21, Тик  1000<div class="dcls">X</div></div>
  <div class="dbody">
    <div class="d-flex dcols">
      <div class="dleft">
        <div class="d-flex">
          <div class="cw1 d-flex flex-column vg15">
            <button class="btn dbtn org h35">Best Sell Limit<br>4235.50</button>
            <button class="btn dbtn blu h35">Best Buy Limit<br>4235.00</button>
          </div>
          <div class="cw2 d-flex flex-column vg10">
            <button class="btn dbtn org h20">SELL</button>
            <button class="btn dbtn red h24">CLOSE</button>
            <button class="btn dbtn blu h20">BUY</button>
          </div>
          <div class="cw3 d-flex flex-column vg10">
            <button class="btn dbtn org h20">Delete</button>
            <button class="btn dbtn lgr h24">Delete all</button>
            <button class="btn dbtn blu h20">Delete</button>
          </div>
        </div>
        <div class="rw rv">
          <span class="ps-1 ob">объем ордера</span>
          <span class="spn s57 ms-auto">1<u></u><u></u></span>
          <button class="btn dbtn lgr h21 cw3">Reverse</button>
        </div>
        <div class="rw rs">
          <span class="chk on"></span><span class="lbsl">SL</span>
          <span class="spn s64">7<u></u><u></u></span>
          <span class="chk on lbtp"></span><span>TP</span>
          <span class="spn s65 ms-auto">5<u></u><u></u></span>
        </div>
      </div>
      <div class="dright">
        <div class="gbx gl">
          <span class="gt">Лимитный ордер</span>
          <div class="rw"><span class="chk on"></span>отменяется, если цена ушла на</div>
          <div class="rw"><span class="spn s57">6<u></u><u></u></span><span class="m8">тиков</span></div>
          <div class="rw"><span class="chk"></span><span class="lb100">передвигается на</span><span class="spn s41">0<u></u><u></u></span><span class="m8">тиков</span></div>
          <div class="rw"><span class="lb102">если цена прошла</span><span class="spn s47">0<u></u><u></u></span><span class="m6">тиков и</span></div>
          <div class="rw"><span class="lb102">прошло не более</span><span class="spn s57">0<u></u><u></u></span><span class="m9">сек.</span></div>
        </div>
        <div class="rw tkp"><span class="chk on"></span>тейкпрофит лимитным ордером</div>
      </div>
    </div>
    <div class="d-flex dbot">
      <div class="gbx gb">
        <span class="gt">Дельта/Объем</span>
        <div class="rw"><span class="rdo on"></span><span class="wl1">покупка</span><span class="chk"></span><span class="vk">ВКЛЮЧИТЬ</span></div>
        <div class="rw"><span class="rdo"></span><span class="wl1">продажа</span><span class="spn s57">5<u></u><u></u></span><span class="m2">таймер, сек</span></div>
        <div class="rw"><span class="chk on"></span><span class="lb1">использовать линию</span><span class="chk on"></span>лимит</div>
        <div class="rw"><span class="spn s41">1<u></u><u></u></span><span class="dp">допуск по сигналу в тиках</span></div>
      </div>
      <div class="gbx gb gb2">
        <span class="gt">Имбаланс</span>
        <div class="rw"><span class="rdo on"></span><span class="wl1">покупка</span><span class="chk"></span><span class="vk">ВКЛЮЧИТЬ</span></div>
        <div class="rw"><span class="rdo"></span><span class="wl1">продажа</span><span class="spn s57">5<u></u><u></u></span><span class="m2">таймер, сек</span></div>
        <div class="rw"><span class="chk on"></span><span class="lb2">использовать линию</span><span class="chk on"></span>лимит</div>
        <div class="rw"><span class="spn s41">1<u></u><u></u></span><span class="dp">допуск по сигналу в тиках</span></div>
      </div>
    </div>
  </div>
</div>

<script src="https://cdn.jsdelivr.net/npm/bootstrap@5.3.3/dist/js/bootstrap.bundle.min.js"></script>
<script>
const AX = '#b0c4de';
const FONT = 'font-family="Liberation Sans"';

function axis(x, x2, from, to, y0, step, yMin, yMax) {
  let s = '';
  for (let p = from; p >= to; p--) {
    const y = y0 + (from - p) * step;
    if (y < yMin || y > yMax) continue;
    s += `<path d="M${x} ${y}h13" stroke="${AX}"/>`;
    for (let k = 1; k < 4; k++) {
      const ym = y + k * step / 4;
      if (ym < yMax) s += `<path d="M${x} ${ym}h${k == 2 ? 6 : 3}" stroke="#7f8ea3"/>`;
    }
    s += `<text x="${x2}" y="${y + 5}" text-anchor="end" fill="${AX}" font-size="13.5" ${FONT}>${p}.00</text>`;
  }
  return s;
}

/* left chart, footprint clusters: x, first row centre, rows (* green text, t teal, u purple) */
const clusters = [
  [4, 122, '46 46 7'], [34, 122, '88 143 87u 111u 71 40'], [64, 122, '90* 149* 96* 64* 128 38'],
  [94, 122, '67 232 88 135 88u 191 298 240 62u 3'], [124, 192, '53*t 339* 440 533 135u 19'],
  [154, 162, '50* 132* 317* 264 243* 313* 213* 127*'], [184, 122, '99*t 148* 272* 242* 149 176* 298* 201'],
  [214, 172, '46* 192* 564 368 218 226 47'], [244, 212, '30* 94* 138 445 297 263 167u 70u'],
  [274, 232, '48* 109* 176 296* 291* 253 330 88u'], [304, 232, '31* 221* 458* 517 392 148 31'],
  [334, 242, '5* 161t 255* 156 225* 278 209 187 221 28'], [364, 212, '70*t 216* 243* 193 51u 57u 144 279 188* 167'],
  [394, 172, '11 115 240t 234 54t 178 139* 233 87t 141t 135 2'], [424, 202, '60 191 295 282* 297 218* 218 95u'],
  [454, 252, '11 143 144* 376 324 300 143 169u 6'], [484, 262, '40* 195 333* 557 283 91 49'],
  [514, 252, '85t 188 170 146 229* 153u 144 64u']
];
const strips = [[32,124,166,'r'],[62,124,166,'c'],[92,124,216,'r'],[122,189,216,'c'],[152,179,196,'c'],[182,179,186,'c'],[212,179,216,'r'],[242,209,286,'r'],[272,259,286,'c'],[302,249,276,'r'],[332,249,276,'c'],[362,249,276,'r'],[392,199,282,'c'],[422,199,262,'r'],[452,249,315,'r'],[482,269,324,'c'],[512,269,315,'r']];
const boxes = [[32,142,'r'],[92,142,'r'],[92,162,'r'],[92,202,'r'],[242,232,'r'],[242,272,'r'],[332,312,'r'],[362,252,'r'],[362,262,'r'],[392,172,'r'],[392,202,'c'],[392,242,'c'],[392,252,'c'],[392,272,'c'],[422,202,'r'],[452,252,'r'],[452,321,'c'],[482,302,'c'],[512,252,'r']];

function leftChart() {
  let s = '<defs><clipPath id="cpl"><rect x="6" y="124" width="680" height="400"/></clipPath></defs>';
  s += '<g clip-path="url(#cpl)">';
  clusters.forEach(([x, y0, txt]) => {
    const rows = txt.split(' ');
    const top = y0 - 4.5, h = rows.length * 10;
    s += `<rect x="${x + .5}" y="${top}" width="27" height="${h}" fill="#404040" stroke="#a3a3a3"/>`;
    rows.forEach((r, i) => {
      const y = y0 + i * 10, v = parseInt(r);
      if (r.includes('t')) s += `<rect x="${x + 1}" y="${y - 4}" width="26" height="7" fill="#007b9e"/>`;
      if (r.includes('u')) s += `<rect x="${x + 1}" y="${y - 4}" width="26" height="7" fill="#5a48a8"/>`;
      s += `<text x="${x + 14}" y="${y + 3}" text-anchor="middle" font-size="9" fill="${r.includes('*') ? '#cdf58c' : '#ffe3e3'}" ${FONT}>${v}</text>`;
    });
  });
  strips.forEach(([x, a, b, c]) => s += `<rect x="${x}" y="${a}" width="3" height="${b - a}" fill="${c == 'r' ? '#dc143c' : '#00ced1'}"/>`);
  boxes.forEach(([x, y, c]) => {
    const red = c == 'r';
    s += `<rect x="${x + .5}" y="${y + .5}" width="28" height="10" fill="${red ? 'rgba(150,30,30,.6)' : 'rgba(0,190,190,.3)'}" stroke="${red ? '#d85050' : '#00cfd6'}"/>`;
  });
  s += '<path d="M369 238l6 5-6 6zM399 227l6 5-6 6zM489 277l6 5-6 6z" fill="#ff0"/><path d="M381 267l-6 5 6 6zM411 187l-6 5 6 6z" fill="#0ff"/>';
  s += '</g>';
  // order and price lines
  s += '<rect x="6" y="292" width="699" height="1.300" fill="#ff8c00"/><rect x="6" y="311" width="686" height="1.300" fill="#3d5fc8"/><rect x="255" y="310" width="349" height="3" fill="#0000ff"/><rect x="6" y="350" width="699" height="1.300" fill="#f00"/>';
  s += axis(692.5, 767, 4246, 4226, 102.2, 19.85, 100, 500);
  s += `<path d="M692.500 99V522" stroke="${AX}"/><path d="M6 522.500H772M6 543.500H772" stroke="${AX}"/>`;
  s += '<path d="M534 100h12l-6 5z" fill="#b0c4de"/><path d="M697 312l7-5h7v10h-7z" fill="#8a8a8a"/>';
  s += `<text x="548" y="329" fill="${AX}" font-size="12" font-weight="700" letter-spacing=".6" ${FONT}>21:31:53</text><text x="548" y="342" fill="${AX}" font-size="12" font-weight="700" ${FONT}>164</text>`;
  s += `<svg x="8" y="502" width="18" height="18"><use href="#i-tool"/></svg>`;
  s += `<text x="31" y="516" fill="${AX}" font-size="12.500" letter-spacing=".25" ${FONT} xml:space="preserve">O: 4242.00  H: 4245.25  L: 4241.50  C: 4242.25</text>`;
  [[91,'13:30'],[181,'13:42'],[271,'14:06'],[361,'14:39'],[451,'15:21']].forEach(([x, t]) => s += `<text x="${x}" y="558" text-anchor="middle" fill="${AX}" font-size="12.500" ${FONT}>${t}</text>`);
  s += `<rect x="522.500" y="545.500" width="70" height="15" fill="none" stroke="${AX}"/>`;
  document.getElementById('svl').innerHTML = s;
}

/* right chart, coordinates read off the 2.67x crop */
const px = X => +(780 + X / 2.67).toFixed(1), py = Y => +(90 + Y / 3).toFixed(1);
const prof = [[94,103],[102,220],[114,277],[126,264],[138,457],[150,740],[162,585],[174,561],[186,505],[198,497],[210,424],[222,315],[234,315],[246,317],[258,403],[270,339],[282,248],[294,291],[306,363],[318,350],[330,189],[342,226],[354,248],[366,146],[378,184],[390,309],[402,344],[414,197],[426,135],[438,195],[450,195],[462,170],[474,130],[486,168],[498,185],[510,168],[522,185],[534,540],[546,640],[558,520],[570,494],[582,432],[594,400],[606,515],[618,510],[630,560],[642,590],[654,556],[666,590],[678,560],[690,590],[702,830],[714,1020],[726,1150],[738,1010],[750,985],[762,985],[774,905],[786,900],[798,700],[810,588],[822,320],[834,213],[846,315],[858,233],[870,221]];
const candles = [[19,'g',320,356,310,370],[33,'r',332,380,332,417],[49,'g',320,392,320,392],[67,'r',320,343,295,343],[84,'g',332,344,332,356],[100,'g',308,332,295,332],[118,'r',308,584,295,610],[135,'r',584,608,584,656],[151,'r',608,632,560,656],[170,'g',536,620,518,620],[205,'g',451,548,415,560],[220,'r',451,512,380,536],[236,'r',500,632,488,644],[255,'g',560,632,522,644],[271,'g',536,548,536,598],[287,'r',536,728,500,752],[305,'r',728,752,728,752],[322,'g',680,752,644,800],[338,'r',680,740,680,776],[357,'d',740,740,740,824],[373,'g',704,740,680,764],[389,'g',680,716,668,764],[407,'r',680,704,644,752],[424,'r',704,752,680,776],[440,'g',740,752,716,788],[458,'g',716,740,692,764],[475,'r',728,812,716,824],[493,'g',716,812,700,885],[510,'g',680,716,605,716],[525,'r',692,764,692,776],[545,'r',752,812,740,820],[561,'g',740,812,728,820],[577,'g',668,728,668,752],[595,'d',668,668,620,680],[611,'g',632,668,608,692],[627,'g',548,644,548,644],[646,'r',548,632,498,656],[662,'r',620,632,584,644],[678,'r',632,680,632,680],[697,'g',668,692,632,716],[713,'r',668,704,668,728],[731,'r',704,716,692,740],[747,'r',716,776,716,776],[763,'g',764,776,716,788],[781,'d',752,752,740,800],[798,'r',752,848,740,860],[815,'g',800,848,788,885],[832,'r',800,848,788,872],[849,'g',776,836,776,836],[866,'d',788,788,764,800],[884,'r',800,812,764,812],[900,'d',812,812,776,824],[916,'g',740,812,740,812],[934,'r',740,776,740,776],[951,'r',788,800,764,812],[967,'r',800,812,776,812],[985,'d',812,812,752,824],[1001,'g',740,812,728,812],[1020,'g',728,740,704,740],[1037,'r',716,728,704,740],[1053,'d',728,728,704,764],[1071,'r',728,752,704,752],[1087,'r',752,800,752,812],[1104,'g',788,812,788,836],[1122,'g',788,800,764,812],[1138,'r',800,858,800,858]];
const bubbles = [[118,584,10.5,'#f4a6a6'],[170,535,6.500,'#fff4f0'],[236,632,5.500,'#fbc8c0'],[287,728,8.500,'#fcd6d0'],[322,678,6.500,'#fde4e0'],[357,740,6,'#fff'],[493,715,6.500,'#d6f0f0'],[545,812,5.500,'#ea9090'],[646,632,5.500,'#e4f4f8']];
const vols = [[19,'r',340],[33,'r',330],[49,'t',340],[67,'r',360],[84,'t',370],[100,'t',350],[119,'r',168],[135,'t',248],[151,'r',300],[170,'r',290],[205,'t',340],[220,'r',330],[236,'r',320],[255,'t',340],[271,'t',360],[287,'r',228],[305,'r',340],[322,'r',270],[338,'r',340],[357,'t',350],[373,'t',350],[389,'t',350],[407,'r',350],[424,'r',340],[440,'t',370],[458,'t',360],[475,'r',340],[493,'t',276],[510,'t',296],[525,'r',320],[545,'r',350],[561,'t',340],[577,'t',340],[598,'t',373],[612,'t',373],[627,'t',354],[646,'t',324],[662,'t',360],[678,'r',372],[697,'r',363],[713,'r',372],[731,'t',375],[747,'t',375],[763,'r',369],[781,'t',363],[798,'r',348],[815,'r',327],[832,'t',357],[849,'t',378],[866,'t',378],[884,'r',384],[900,'r',390],[916,'t',387],[934,'t',390],[951,'r',393],[967,'t',387],[985,'t',360],[1001,'t',375],[1020,'t',384],[1037,'t',384],[1053,'r',351],[1071,'t',375],[1087,'r',381],[1104,'t',396],[1122,'t',393],[1138,'r',387]];

function rightChart() {
  let s = '';
  prof.forEach(([Y, X]) => s += `<rect x="785" y="${py(Y) - 1}" width="${px(X) - 785}" height="2" fill="#5c5c5c" stroke="#777" stroke-width=".4"/>`);
  s += `<path d="M${px(248)} 208.500H1211" stroke="#d2b48c" stroke-width="2.500"/><path d="M788 384.500H1211" stroke="#d2b48c" stroke-width="2.500"/>`;
  s += '<path d="M786 332.500H1211" stroke="#7faa1e" stroke-width="2.500"/><path d="M785 376.500H1295" stroke="#708090"/>';
  bubbles.forEach(([X, Y, r, c]) => s += `<circle cx="${px(X)}" cy="${py(Y)}" r="${r}" fill="${c}"/>`);
  candles.forEach(([X, c, a, b, wa, wb]) => {
    const x = Math.round(px(X));
    s += `<path d="M${x + .5} ${py(wa)}V${py(wb)}" stroke="#999"/>`;
    if (c == 'd') s += `<path d="M${x - 2} ${py(a) + .5}h5" stroke="#aaa"/>`;
    else s += `<rect x="${x - 2}" y="${py(a)}" width="5" height="${py(b) - py(a)}" fill="${c == 'r' ? '#e81010' : '#3cc03c'}" stroke="#888" stroke-width=".6"/>`;
  });
  s += axis(1289.5, 1364, 4252, 4232, 108, 16, 97, 431);
  s += `<path d="M1289.500 97V522" stroke="${AX}"/><path d="M785 431.500H1366M785 522.500H1366M785 543.500H1366" stroke="${AX}"/>`;
  s += '<path d="M1203 98h12l-6 5z" fill="#b0c4de"/><path d="M1294 377l10-9h62v18h-62z" fill="#808080"/>';
  s += `<text x="1364" y="382" text-anchor="end" font-size="13.500" font-weight="700" fill="#222" ${FONT}>4235.25</text>`;
  s += `<text x="1266" y="394" text-anchor="end" fill="${AX}" font-size="12" font-weight="700" letter-spacing=".6" ${FONT}>21:31:53</text><text x="1266" y="407" text-anchor="end" fill="${AX}" font-size="12" font-weight="700" letter-spacing=".6" ${FONT}>01:06</text>`;
  s += `<svg x="788" y="410" width="18" height="18"><use href="#i-tool"/></svg>`;
  vols.forEach(([X, c, Y]) => {
    const x = px(X) - 3;
    s += `<rect x="${x}" y="${380 + Y / 3}" width="6" height="${519 - (380 + Y / 3)}" fill="${c == 'r' ? '#a80000' : '#00b4b4'}"/>`;
  });
  s += `<text x="791" y="449" fill="${AX}" font-size="12.500" ${FONT}>Volume</text>`;
  s += `<path d="M1290 513h13" stroke="#fff"/><rect x="1304" y="505" width="52" height="15" fill="#808080" stroke="#fff"/><text x="1353" y="517" text-anchor="end" font-size="12" fill="#e8e8e8" ${FONT}>615</text>`;
  [[1030,'15:06'],[1120,'15:48']].forEach(([x, t]) => s += `<text x="${x}" y="558" text-anchor="middle" fill="${AX}" font-size="12.500" ${FONT}>${t}</text>`);
  s += `<rect x="1132.500" y="545.500" width="75" height="15" fill="none" stroke="${AX}"/>`;
  s += `<text x="1358" y="558" text-anchor="end" fill="${AX}" font-size="13" letter-spacing=".2" ${FONT}>2021.06.14 16:30:00</text>`;
  document.getElementById('svr').innerHTML = s;
}
leftChart();
rightChart();
</script>
</body>
</html>
